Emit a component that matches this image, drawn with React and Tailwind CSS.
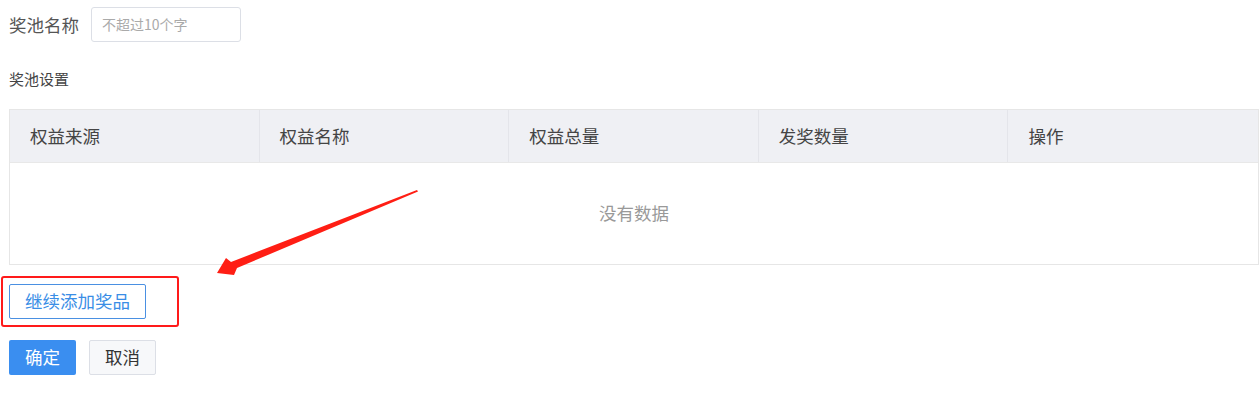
export default function App() {
  const cols = ['权益来源', '权益名称', '权益总量', '发奖数量', '操作'];
  return (
    <div className="relative h-[420px] w-[1260px] bg-white text-[#333]" style={{ fontFamily: '"Noto Sans CJK SC", "Microsoft YaHei", sans-serif' }}>
      <div className="pl-[9px] pr-[1px] pt-[7px]">
        <div className="flex items-center">
          <span className="text-[17.5px] leading-[35px] text-[#555]">奖池名称</span>
          <div className="ml-[12px] flex h-[35px] w-[150px] items-center rounded-[3px] border border-[#dcdfe6] px-[10px] text-[14px] text-[#aaa]">
            不超过10个字
          </div>
        </div>

        <div className="mt-[27px] text-[15px] leading-[20px] text-[#444]">奖池设置</div>

        <div className="mt-[20px] border border-[#e6e6e6]">
          <div className="grid h-[52px] grid-cols-5 bg-[#eff0f4]">
            {cols.map((c, i) => (
              <div
                key={c}
                className={`flex items-center pl-[20px] text-[17.5px] text-[#444] ${i < 4 ? 'border-r border-[#e4e5ea]' : ''}`}
              >
                {c}
              </div>
            ))}
          </div>
          <div className="flex h-[102px] items-center justify-center border-t border-[#e8e8e8] text-[17.5px] text-[#999]">
            没有数据
          </div>
        </div>

        <div className="mt-[19px]">
          <button className="h-[35px] w-[137px] rounded-[2px] border border-[#4a90e2] bg-white text-[17.5px] text-[#3a8ee6]">
            继续添加奖品
          </button>
        </div>

        <div className="mt-[21px] flex gap-[13px]">
          <button className="h-[35px] w-[67px] rounded-[2px] bg-[#3a8ef0] text-[17.5px] text-white">确定</button>
          <button className="h-[35px] w-[67px] rounded-[2px] border border-[#dcdfe6] bg-[#f7f8fa] text-[17.5px] text-[#333]">取消</button>
        </div>
      </div>

      {/* annotation overlay */}
      <div className="pointer-events-none absolute left-[1px] top-[276px] h-[51px] w-[178px] rounded-[3px] border-[2.5px] border-[#ff1a1a]" />
      <svg className="pointer-events-none absolute left-0 top-0" width="1260" height="420">
        <polygon
          points="417,190 418,191.5 237,268 234,275 217,273 226,258 231,262"
          fill="#ff1e14"
        />
      </svg>
    </div>
  );
}
